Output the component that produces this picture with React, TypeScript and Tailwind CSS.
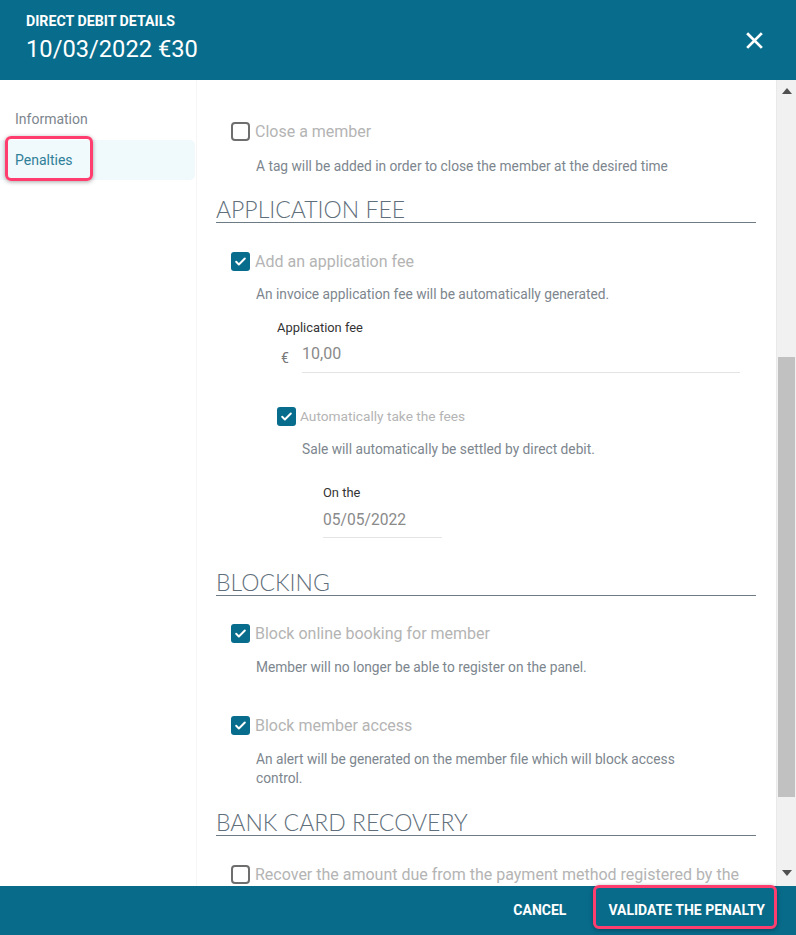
import React from 'react';

const font = { fontFamily: 'Roboto, "Liberation Sans", sans-serif' };

function Checkbox({ checked }: { checked: boolean }) {
  if (checked) {
    return (
      <span className="w-[19px] h-[19px] rounded-[3px] bg-[#086d8c] flex items-center justify-center shrink-0">
        <svg width="13" height="13" viewBox="0 0 24 24" fill="none" stroke="white" strokeWidth="3.6" strokeLinecap="round" strokeLinejoin="round">
          <path d="M4 12.5l5 5L20 6.5" />
        </svg>
      </span>
    );
  }
  return <span className="w-[19px] h-[19px] rounded-[4px] border-2 border-[#6e6e6e] shrink-0" />;
}

function Option({ checked, label, mt }: { checked: boolean; label: string; mt: string }) {
  return (
    <div className={`flex items-center gap-[5px] h-[19px] ml-[15px] ${mt}`}>
      <Checkbox checked={checked} />
      <span className="text-[16px] leading-[19px] text-[#b4b4b4] whitespace-nowrap">{label}</span>
    </div>
  );
}

function Heading({ text, mt }: { text: string; mt: string }) {
  return (
    <div
      className={`h-[27px] leading-[26px] border-b border-[#6f7b84] text-[23px] font-light text-[#5f6f7b] ${mt}`}
      style={{ fontFamily: 'Lato, "Noto Sans", sans-serif' }}
    >
      {text}
    </div>
  );
}

export default function App() {
  return (
    <div className="relative w-[796px] h-[935px] flex flex-col bg-white overflow-hidden" style={font}>
      {/* header */}
      <div className="h-[80px] shrink-0 bg-[#086d8c] flex items-start justify-between pl-[26px] pr-[33px]">
        <div className="pt-[12px]">
          <div className="text-[14.2px] font-bold text-white leading-[18px]">DIRECT DEBIT DETAILS</div>
          <div className="text-[23.7px] text-white leading-[30px] mt-[4px]">10/03/2022 €30</div>
        </div>
        <svg className="mt-[32px]" width="17" height="17" viewBox="0 0 16 16" fill="none" stroke="white" strokeWidth="2.6" strokeLinecap="square">
          <path d="M2 2l12 12M14 2L2 14" />
        </svg>
      </div>

      {/* body */}
      <div className="flex flex-1 min-h-0">
        <div className="w-[197px] shrink-0 border-r border-[#f6f6f6] pt-[19px]">
          <div className="h-[40px] leading-[40px] pl-[15px] text-[14px] text-[#7d868e]">Information</div>
          <div className="h-[40px] leading-[40px] mt-[1px] pl-[15px] text-[14px] text-[#2f7f99] bg-[#f0f9fb] rounded-r-[5px] mr-[1px]">Penalties</div>
        </div>

        <div className="flex-1 min-w-0 pl-[19px] pr-[20px]">
          <Option checked={false} label="Close a member" mt="mt-[42px]" />
          <div className="ml-[40px] mt-[15px] text-[13.75px] leading-[20px] text-[#7d868e]">
            A tag will be added in order to close the member at the desired time
          </div>

          <Heading text="APPLICATION FEE" mt="mt-[20px]" />
          <Option checked label="Add an application fee" mt="mt-[29px]" />
          <div className="ml-[40px] mt-[13px] text-[13.75px] leading-[20px] text-[#7d868e]">
            An invoice application fee will be automatically generated.
          </div>

          <div className="ml-[61px] mr-[16px]">
            <div className="mt-[16px] text-[12.9px] leading-[16px] text-[#333]">Application fee</div>
            <div className="flex items-center mt-[7px]">
              <span className="w-[25px] pl-[4px] text-[14px] text-[#777]">€</span>
              <div className="flex-1 h-[30px] leading-[22px] border-b border-[#e4e4e4] text-[16px] text-[#8a8a8a]">10,00</div>
            </div>

            <div className="flex items-center gap-[4px] h-[19px] mt-[34px]">
              <Checkbox checked />
              <span className="text-[13.7px] leading-[19px] text-[#b4b4b4]">Automatically take the fees</span>
            </div>
            <div className="ml-[25px] mt-[13px] text-[13.75px] leading-[20px] text-[#7d868e]">
              Sale will automatically be settled by direct debit.
            </div>

            <div className="ml-[46px]">
              <div className="mt-[26px] text-[12.9px] leading-[16px] text-[#333]">On the</div>
              <div className="mt-[8px] w-[119px] h-[29px] leading-[22px] border-b border-[#e4e4e4] text-[15.6px] text-[#8a8a8a]">05/05/2022</div>
            </div>
          </div>

          <Heading text="BLOCKING" mt="mt-[31px]" />
          <Option checked label="Block online booking for member" mt="mt-[28px]" />
          <div className="ml-[40px] mt-[14px] text-[13.75px] leading-[20px] text-[#7d868e]">
            Member will no longer be able to register on the panel.
          </div>
          <Option checked label="Block member access" mt="mt-[39px]" />
          <div className="ml-[40px] mt-[15px] w-[450px] text-[13.75px] leading-[19px] text-[#7d868e]">
            An alert will be generated on the member file which will block access control.
          </div>

          <Heading text="BANK CARD RECOVERY" mt="mt-[21px]" />
          <Option checked={false} label="Recover the amount due from the payment method registered by the" mt="mt-[29px]" />
        </div>

        {/* scrollbar */}
        <div className="w-[20px] shrink-0 bg-[#f1f1f1] border-l border-[#e9e9e9] flex flex-col items-center">
          <div className="mt-[8px] w-0 h-0 border-l-[5px] border-r-[5px] border-b-[6px] border-l-transparent border-r-transparent border-b-[#505050]" />
          <div className="mt-[263px] w-[17px] h-[440px] bg-[#c1c1c1]" />
          <div className="mt-[73px] w-0 h-0 border-l-[5px] border-r-[5px] border-t-[6px] border-l-transparent border-r-transparent border-t-[#505050]" />
        </div>
      </div>

      {/* footer */}
      <div className="h-[49px] shrink-0 bg-[#086b8a] flex items-center justify-end pr-[31px] gap-[42px]">
        <span className="text-[14px] font-bold text-white">CANCEL</span>
        <span className="text-[14px] font-bold text-white">VALIDATE THE PENALTY</span>
      </div>

      {/* annotation highlights */}
      <div className="absolute left-[5px] top-[136px] w-[88px] h-[45px] border-[3px] border-[#ff3d6e] rounded-[6px] shadow-[0_1px_4px_rgba(0,0,0,0.35)]" />
      <div className="absolute left-[593px] top-[885px] w-[184px] h-[44px] border-[3px] border-[#ff3d6e] rounded-[6px] shadow-[0_1px_4px_rgba(0,0,0,0.35)]" />
    </div>
  );
}
